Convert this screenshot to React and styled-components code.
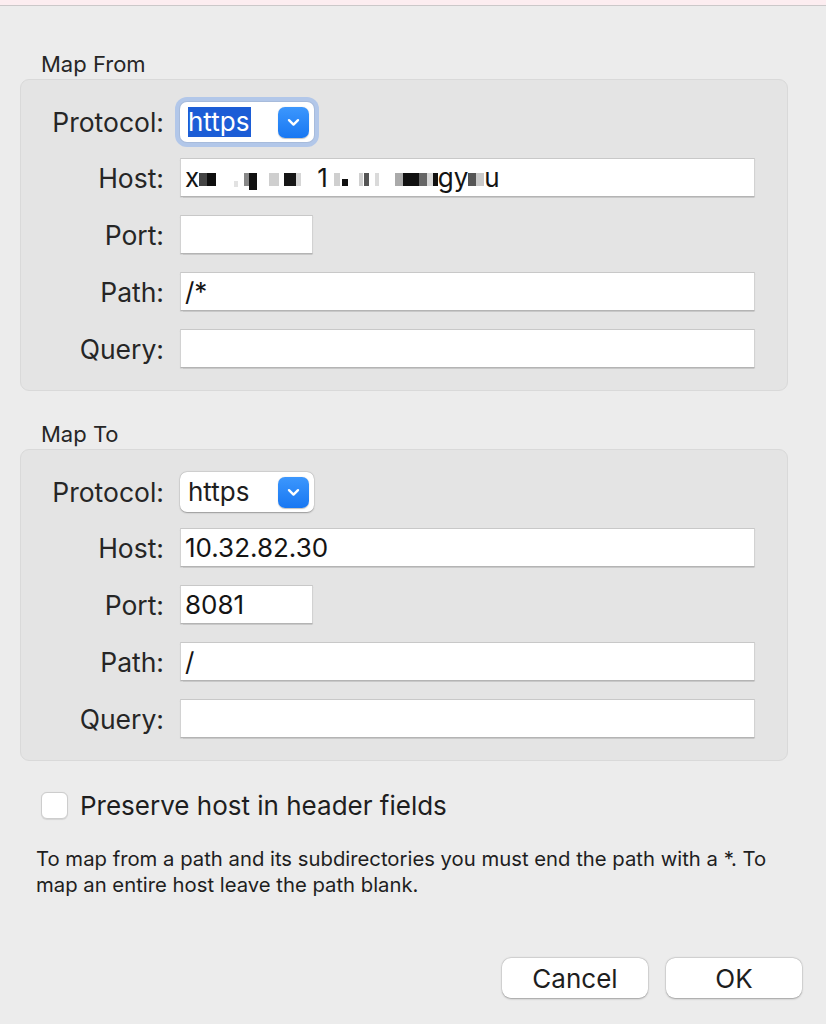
import React from "react";
import styled, { createGlobalStyle } from "styled-components";

const Global = createGlobalStyle`
  html, body { margin: 0; padding: 0; background: #ececec; }
  body { font-family: Inter, "Noto Sans", "Liberation Sans", sans-serif; color: #222; }
`;

const Page = styled.div`
  width: 826px;
  height: 1024px;
  background: #ececec;
  overflow: hidden;
  display: flex;
  flex-direction: column;
`;

const TopStrip = styled.div`
  height: 5px;
  background: #fcedf0;
  border-bottom: 1px solid #cbc8c9;
  flex: none;
`;

const Content = styled.div`
  padding: 45px 24px 0 20px;
  display: flex;
  flex-direction: column;
`;

const SectionTitle = styled.div`
  font-size: 22px;
  line-height: 26px;
  height: 26px;
  margin: ${(p) => (p.$first ? "0" : "30px")} 0 2px 21px;
  color: #262626;
`;

const Group = styled.div`
  margin-right: 14px;
  background: #e4e4e4;
  border: 1px solid #d9d9d9;
  border-radius: 9px;
  padding: 22px 0 22px 0;
  display: grid;
  grid-template-columns: 143px 1fr;
  column-gap: 16px;
  row-gap: 18px;
  align-items: center;
`;

const Label = styled.div`
  font-size: 26.5px;
  line-height: 30px;
  text-align: right;
  color: #262626;
  ${(p) => p.$popup && "margin-bottom: -2px;"}
`;

const Field = styled.div`
  box-sizing: border-box;
  height: 39px;
  width: ${(p) => (p.$w ? `${p.$w}px` : "575px")};
  background: #fff;
  border: 1px solid #d2d2d2;
  border-top-color: #c8c8c8;
  border-bottom-color: #b4b4b4;
  box-shadow: 0 0.5px 1px rgba(0, 0, 0, 0.12);
  padding: 0 4px;
  font-size: 26px;
  line-height: 37px;
  color: #141414;
  display: flex;
  align-items: center;
  white-space: nowrap;
  overflow: hidden;
`;

const PopupCell = styled.div`
  margin-bottom: -2px;
  display: flex;
`;

const Popup = styled.div`
  box-sizing: border-box;
  width: 134px;
  height: 40px;
  background: #fff;
  border-radius: 7px;
  box-shadow: ${(p) =>
    p.$focused
      ? "0 0 0 1px rgba(0,0,0,0.06), 0 0 0 5px #b2c7e9"
      : "0 0.5px 1.5px rgba(0,0,0,0.3), 0 0 0 0.5px rgba(0,0,0,0.08)"};
  display: flex;
  align-items: center;
  justify-content: space-between;
  padding: 0 5px 0 8px;
  font-size: 26px;
  color: #1e1e1e;
`;

const Selected = styled.span`
  background: ${(p) => (p.$on ? "#1c5dd6" : "transparent")};
  color: ${(p) => (p.$on ? "#fff" : "inherit")};
  line-height: 30px;
  height: 30px;
  display: inline-block;
  padding: 0 2px 0 0;
`;

const ChevronButton = styled.div`
  width: 31px;
  height: 31px;
  border-radius: 7px;
  background: linear-gradient(#3c97fd, #1877f2);
  display: flex;
  align-items: center;
  justify-content: center;
  box-shadow: 0 0.5px 1px rgba(0, 0, 0, 0.25);
`;

const Block = styled.span`
  display: inline-block;
  flex: none;
  width: ${(p) => p.$w}px;
  height: ${(p) => p.$h || 13}px;
  margin-left: ${(p) => p.$gap || 0}px;
  background: ${(p) => p.$c};
  align-self: center;
  position: relative;
  top: ${(p) => p.$dy || 2}px;
`;

const Frag = styled.span`
  margin-left: ${(p) => p.$gap || 0}px;
`;

const CheckRow = styled.label`
  margin: 29px 0 0 21px;
  display: flex;
  align-items: center;
  gap: 12px;
  font-size: 26px;
  color: #1e1e1e;
`;

const CheckBox = styled.span`
  box-sizing: border-box;
  width: 27px;
  height: 27px;
  border-radius: 6px;
  background: #fff;
  border: 1px solid #cdcdcd;
  box-shadow: 0 0.5px 1px rgba(0, 0, 0, 0.1);
`;

const Help = styled.p`
  margin: 25px 0 0 16px;
  font-size: 20.3px;
  line-height: 26px;
  color: #1e1e1e;
  width: 770px;
`;

const ButtonRow = styled.div`
  margin-top: 60px;
  display: flex;
  justify-content: flex-end;
  gap: 18px;
`;

const Button = styled.button`
  width: ${(p) => p.$w}px;
  height: 40px;
  border: none;
  border-radius: 9px;
  background: #fff;
  box-shadow: 0 0.5px 2px rgba(0, 0, 0, 0.3), 0 0 0 0.5px rgba(0, 0, 0, 0.08);
  font-family: inherit;
  font-size: 26px;
  color: #1e1e1e;
  padding: 0;
`;

const Chevron = () => (
  <svg width="13" height="9" viewBox="0 0 13 9">
    <path d="M2 2.2 L6.5 6.6 L11 2.2" fill="none" stroke="#fff" strokeWidth="2.4" strokeLinecap="round" strokeLinejoin="round" />
  </svg>
);

const MaskedHost = () => (
  <>
    <span>x</span>
    <Block $w={8} $c="#444" />
    <Block $w={9} $c="#0e0e0e" />
    <Block $w={4} $h={6} $c="#e2e2e2" $gap={18} $dy={6} />
    <Block $w={5} $c="#888" $gap={6} />
    <Block $w={8} $h={17} $c="#111" $dy={4} />
    <Block $w={10} $c="#cfcfcf" $gap={12} />
    <Block $w={12} $c="#161616" $gap={5} />
    <Block $w={5} $c="#d6d6d6" />
    <Frag $gap={16}>1</Frag>
    <Block $w={6} $c="#cfcfcf" $gap={6} />
    <Block $w={6} $h={7} $c="#111" $gap={2} $dy={5} />
    <Block $w={4} $c="#d0d0d0" $gap={11} />
    <Block $w={5} $c="#555" $gap={1} />
    <Block $w={4} $c="#dadada" $gap={6} />
    <Block $w={8} $c="#aaa" $gap={16} />
    <Block $w={16} $c="#111" />
    <Block $w={8} $c="#666" />
    <Block $w={6} $c="#d8d8d8" />
    <Block $w={5} $c="#111" />
    <Frag>gy</Frag>
    <Block $w={8} $c="#555" />
    <Block $w={8} $c="#c9c9c9" />
    <span>u</span>
  </>
);

const Section = ({ title, first, focused, host, port, path }) => (
  <>
    <SectionTitle $first={first}>{title}</SectionTitle>
    <Group>
      <Label $popup>Protocol:</Label>
      <PopupCell>
        <Popup $focused={focused}>
          <Selected $on={focused}>https</Selected>
          <ChevronButton>
            <Chevron />
          </ChevronButton>
        </Popup>
      </PopupCell>
      <Label>Host:</Label>
      <Field>{host}</Field>
      <Label>Port:</Label>
      <Field $w={133}>{port}</Field>
      <Label>Path:</Label>
      <Field>{path}</Field>
      <Label>Query:</Label>
      <Field />
    </Group>
  </>
);

export default function App() {
  return (
    <Page>
      <Global />
      <TopStrip />
      <Content>
        <Section title="Map From" first focused host={<MaskedHost />} port="" path="/*" />
        <Section title="Map To" host="10.32.82.30" port="8081" path="/" />
        <CheckRow>
          <CheckBox />
          Preserve host in header fields
        </CheckRow>
        <Help>
          To map from a path and its subdirectories you must end the path with a *. To
          map an entire host leave the path blank.
        </Help>
        <ButtonRow>
          <Button $w={146}>Cancel</Button>
          <Button $w={136}>OK</Button>
        </ButtonRow>
      </Content>
    </Page>
  );
}
